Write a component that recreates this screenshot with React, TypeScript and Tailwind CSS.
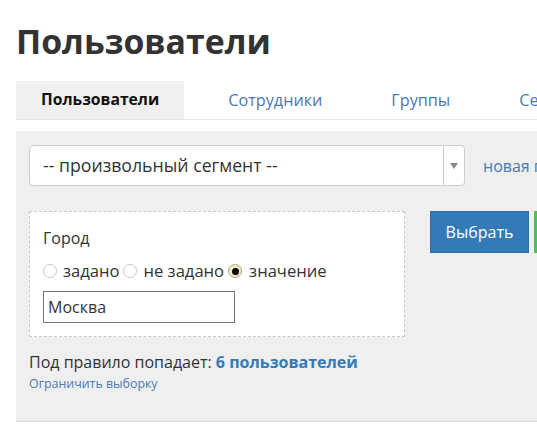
import React from 'react';

const tabs = ['Пользователи', 'Сотрудники', 'Группы', 'Сегменты'];

const Radio: React.FC<{ label: string; checked?: boolean }> = ({ label, checked }) => (
  <label className="flex items-center">
    {checked ? (
      <span className="w-[14px] h-[14px] rounded-full border border-[#b9a57a] bg-[#f3e7c9] flex items-center justify-center mr-[7px]">
        <span className="w-[7px] h-[7px] rounded-full bg-black" />
      </span>
    ) : (
      <span className="w-[14px] h-[14px] rounded-full border border-[#c8c8c8] bg-white mr-[6px]" />
    )}
    <span>{label}</span>
  </label>
);

const App: React.FC = () => {
  return (
    <div className="w-[537px] h-[425px] overflow-hidden bg-white text-[#333] font-['Open_Sans',sans-serif]">
      <div className="pl-[16px]">
        {/* Header */}
        <h1 className="pt-[18px] text-[33.8px] leading-[46px] font-bold">Пользователи</h1>

        {/* Tabs */}
        <div className="mt-[17px] flex whitespace-nowrap border-b border-[#e6e6e6] w-[700px]">
          {tabs.map((t, i) => (
            <div
              key={t}
              className={
                i === 0
                  ? 'bg-[#efefef] h-[38px] px-[25px] flex items-center font-bold text-[15.7px] text-[#111]'
                  : 'h-[38px] px-[25px] ml-[19px] flex items-center text-[16.2px] text-[#4a7ab5]'
              }
            >
              {t}
            </div>
          ))}
        </div>

        {/* Segment panel */}
        <div className="mt-[11px] bg-[#efefef] h-[291px] w-[700px] border-b border-[#dcdcdc] px-[13px] pt-[14px]">
          <div className="flex items-center whitespace-nowrap">
            <div className="w-[436px] h-[41px] bg-white border border-[#ccc] rounded-[4px] flex items-center shrink-0">
              <span className="flex-1 pl-[13px] text-[17.7px]">-- произвольный сегмент --</span>
              <span className="w-[21px] h-full border-l border-[#ccc] flex items-center justify-center">
                <svg width="8" height="6" viewBox="0 0 8 6">
                  <path d="M0 0h8L4 6z" fill="#888" />
                </svg>
              </span>
            </div>
            <span className="ml-[18px] text-[16px] text-[#4a7ab5]">новая группа</span>
          </div>

          <div className="mt-[25px] flex items-start">
            <div className="w-[376px] h-[126px] shrink-0 bg-white border border-dashed border-[#c8c8c8] px-[13px] pt-[15px] text-[16px]">
              <div className="leading-[22px]">Город</div>
              <div className="mt-[12px] flex items-center gap-[4px] leading-[20px] whitespace-nowrap text-[16.6px]">
                <Radio label="задано" />
                <Radio label="не задано" />
                <Radio label="значение" checked />
              </div>
              <input
                readOnly
                value="Москва"
                className="mt-[10px] w-[192px] h-[32px] border border-[#777] px-[4px] text-[16px] text-[#333] outline-none"
              />
            </div>
            <button className="ml-[25px] w-[99px] h-[42px] bg-[#337ab7] border border-[#2e6da4] text-white text-[16px] shrink-0">
              Выбрать
            </button>
            <button className="ml-[5px] w-[40px] h-[42px] bg-[#5cb85c] shrink-0" />
          </div>

          <div className="mt-[15px] text-[16px] leading-[20px] whitespace-nowrap">
            Под правило попадает: <span className="font-bold text-[#337ab7]">6 пользователей</span>
          </div>
          <div className="mt-[3px] text-[12.4px] text-[#4a7ab5]">Ограничить выборку</div>
        </div>
      </div>
    </div>
  );
};

export default App;
